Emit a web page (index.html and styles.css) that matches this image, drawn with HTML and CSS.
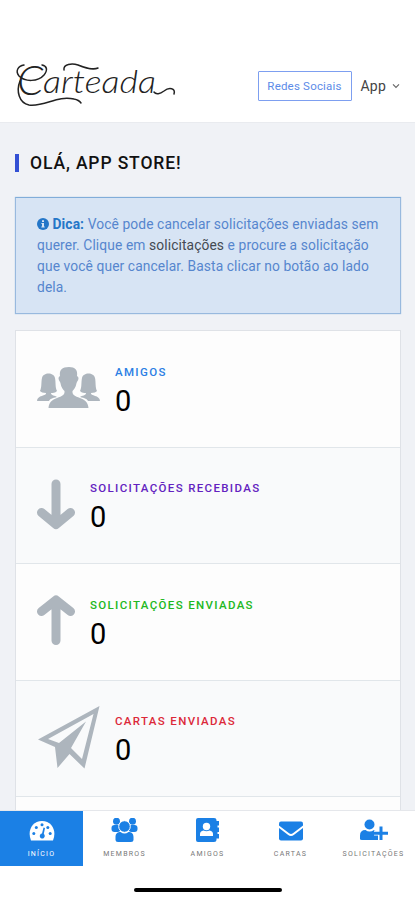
FILE: index.html
```html
<!DOCTYPE html>
<html lang="pt-BR">
<head>
<meta charset="utf-8">
<meta name="viewport" content="width=device-width, initial-scale=1">
<title>Carteada</title>
<link rel="stylesheet" href="styles.css">
</head>
<body>
<div class="app">
  <header class="header">
    <svg class="logo" viewBox="0 0 164 52">
      <text class="logo-cap" x="2" y="38">C</text>
      <text class="logo-text" x="28" y="36" textLength="113" lengthAdjust="spacingAndGlyphs">arteada</text>
      <path class="swash" d="M9 8C3 9 0 14 4 19C10 25 23 25 29 18C33 13 32 9 27 8"/>
      <path class="swash" d="M5 24C1 34 4 46 14 48C30 50 42 38 59 42Q64 43 66 46"/>
      <path class="swash" d="M49 13C48 7 57 6 63 8C70 11 79 13 83 11"/>
      <path class="swash" d="M139 35C141 38 145 37 149 34C154 30 161 31 159 37"/>
    </svg>
    <div class="header-actions">
      <a class="social">Redes Sociais</a>
      <span class="menu">App<svg class="chevron" viewBox="0 0 8 6"><path d="M1 1.3L4 4.5L7 1.3"/></svg></span>
    </div>
  </header>
  <main class="main">
    <h1 class="title">OLÁ, APP STORE!</h1>
    <div class="tip">
      <svg class="info" viewBox="0 0 12 12"><circle cx="6" cy="6" r="6" fill="#2476c8"/><path d="M5 2.2h2v1.7H5zM4.4 5H7v3.5h.7v1H4.3v-1H5V6h-.6z" fill="#d7e4f4"/></svg>
      <b>Dica:</b> Você pode cancelar solicitações enviadas sem<br>querer. Clique em <span class="dark">solicitações</span> e procure a solicitação<br>que você quer cancelar. Basta clicar no botão ao lado<br>dela.
    </div>
    <section class="stats">
      <div class="stat">
        <svg class="wide" viewBox="0 0 63 64">
          <path d="M0 45C0 39 10 40 9 37C6 37 4 36 3 35C5 31 4 26 5 22C6 16 17 16 18 22C19 27 18 31 20 35C18 37 16 37 14 37C14 40 18 39 20 41C15 42 13 43 12 45Z"/>
          <path d="M63 45C63 39 53 40 54 37C57 37 59 36 60 35C58 31 59 26 58 22C57 16 46 16 45 22C44 27 45 31 43 35C45 37 47 37 49 37C49 40 45 39 43 41C48 42 50 43 51 45Z"/>
          <path d="M11.500 52C12 46 15 44 20 42C25 40 28 39 27.500 35C24 32 24 28 23 26C21 23 21 21 23 20C22 14 25 11 32 11C38 11 41 14 40 20C42 21 42 23 40 26C39 28 39 32 35.500 35C35 39 38 40 43 42C48 44 51 46 51.500 52Z"/>
        </svg>
        <div class="copy"><div class="label blue">AMIGOS</div><div class="number">0</div></div>
      </div>
      <div class="stat">
        <svg class="arrow" viewBox="0 0 38 64"><path d="M19 11V51M4.500 39.500L19 51.500L33.500 39.500"/></svg>
        <div class="copy"><div class="label purple">SOLICITAÇÕES RECEBIDAS</div><div class="number">0</div></div>
      </div>
      <div class="stat">
        <svg class="arrow" viewBox="0 0 38 64"><path d="M19 51.500V12M4.500 22.500L19 11L33.500 22.500"/></svg>
        <div class="copy"><div class="label green">SOLICITAÇÕES ENVIADAS</div><div class="number">0</div></div>
      </div>
      <div class="stat">
        <svg class="wide" viewBox="0 0 63 64"><path fill-rule="evenodd" d="M1 33.500L62.500 0L47.500 62.500L32.500 48L20.500 62L18 41ZM11 33L22 37L49 15.500L34 42L45 53L56.500 8Z"/></svg>
        <div class="copy"><div class="label red">CARTAS ENVIADAS</div><div class="number">0</div></div>
      </div>
      <div class="stat"></div>
    </section>
  </main>
  <nav class="nav">
    <a class="tab active"><svg viewBox="0 0 28 26"><path fill="#fff" d="M3 22.500C-1 13 4 3 14 3S29 13 25 22.500Z"/><g fill="#1b80e5"><circle cx="14" cy="6.800" r="1.500"/><circle cx="8.300" cy="9.500" r="1.500"/><circle cx="5.800" cy="15.500" r="1.500"/><circle cx="22.200" cy="15.500" r="1.500"/><circle cx="19.800" cy="9.500" r="1.500"/><path d="M15.500 9.500L17 10L15.800 16A2.500 2.500 0 1 1 14 15.500Z"/></g></svg><span>INÍCIO</span></a>
    <a class="tab"><svg viewBox="0 0 28 26"><circle cx="5.500" cy="3.200" r="3.500"/><circle cx="21.500" cy="3.200" r="3.500"/><rect x=".5" y="7" width="9" height="7" rx="3"/><rect x="17.500" y="7" width="9" height="7" rx="3"/><circle cx="13.500" cy="8.500" r="5.800" stroke="#fff"/><path d="M4.500 24V19C4.500 15 7 14 9.500 14Q13.500 17 17.500 14C20 14 22.500 15 22.500 19V22Q22.500 24 20 24H7Q4.500 24 4.500 22Z"/></svg><span>MEMBROS</span></a>
    <a class="tab"><svg viewBox="0 0 28 26"><path d="M4 0H20Q22.500 0 22.500 2V3H25V7.500H23.500V9.500H25V14H23.500V16H25V20.500H22.500V22Q22.500 24 20 24H4Q2 24 2 22V2Q2 0 4 0Z"/><circle cx="12.500" cy="8.500" r="3.700" fill="#fff"/><path d="M6 18V16Q6 13 9.500 12.500Q12.500 14 15.500 12.500Q19 13 19 16V18Z" fill="#fff"/></svg><span>AMIGOS</span></a>
    <a class="tab"><svg viewBox="0 0 28 26"><rect x="2" y="3.500" width="24" height="19" rx="2"/><path d="M1 8L11.500 16Q14 18 16.500 16L27 8" fill="none" stroke="#fff" stroke-width="2"/></svg><span>CARTAS</span></a>
    <a class="tab"><svg viewBox="0 0 28 26"><circle cx="9.500" cy="6.500" r="5"/><path d="M0 21V17.500Q0 12 5.500 12Q9.500 15 14 12Q17 13 17 17H18V22H2Q0 22 0 21Z"/><path d="M21 8V22M14 15H28" fill="none" stroke="#fff" stroke-width="5"/><path d="M21 8.500V22M14 15.200H28" fill="none" stroke="#1b80e5" stroke-width="3"/></svg><span>SOLICITAÇÕES</span></a>
  </nav>
  <div class="home"><div class="home-bar"></div></div>
</div>
</body>
</html>
```
FILE: styles.css
```css
* { box-sizing: border-box; }
body { margin: 0; font-family: Roboto, "Liberation Sans", sans-serif; background: #fff; color: #111; }
.app { height: 900px; display: flex; flex-direction: column; overflow: hidden; }
.header { height: 123px; flex: none; padding: 57px 15px 0 15px; display: flex; align-items: flex-start; justify-content: space-between; border-bottom: 1px solid #e9ebef; }
.logo { width: 164px; height: 52px; overflow: visible; }
.logo-cap { font: italic 300 42px Lato, sans-serif; fill: #222; }
.logo-text { font: italic 300 31px Lato, sans-serif; fill: #222; }
.swash { fill: none; stroke: #222; stroke-width: 1.5; stroke-linecap: round; }
.header-actions { display: flex; align-items: center; gap: 9px; margin-top: 14px; }
.social { width: 94px; height: 30px; border: 1px solid #7d9ff0; border-radius: 1px; color: #5c8be8; font-size: 11.500px; line-height: 28px; text-align: center; letter-spacing: .2px; white-space: nowrap; }
.menu { display: flex; align-items: center; font-size: 14px; color: #444; letter-spacing: .2px; }
.chevron { width: 8px; height: 6px; margin-left: 6px; fill: none; stroke: #666; stroke-width: 1.1; }
.main { flex: 1; min-height: 0; background: #f0f2f6; padding: 31px 14px 0 15px; overflow: hidden; }
.title { margin: 0; height: 18px; border-left: 4px solid #3350d4; padding-left: 11px; font-size: 17.5px; line-height: 18px; font-weight: 500; letter-spacing: .87px; }
.tip { margin-top: 25px; height: 117px; border: 1px solid #98b9de; border-top-color: #81add9; box-shadow: 0 0 1px #9dbce0; background: #d7e4f4; padding: 16px 0 0 21px; font-size: 13.8px; line-height: 21px; color: #5686ce; white-space: nowrap; letter-spacing: .1px; }
.tip b { color: #2476c8; font-weight: 700; }
.dark { color: #444a52; }
.info { width: 12px; height: 12px; vertical-align: -1px; }
.stats { margin-top: 16px; border: 1px solid #dfe2e7; background: #fdfdfd; }
.stat { height: 116.500px; border-bottom: 1px solid #e1e6ea; padding: 25px 0 0 21px; display: flex; }
.stat:nth-child(even) { background: #f9fafb; }
.stat svg { height: 64px; fill: #adb5bd; flex: none; }
.wide { width: 63px; }
.arrow { width: 38px; }
.stat .arrow { fill: none; stroke: #adb5bd; stroke-width: 9; stroke-linecap: round; stroke-linejoin: round; }
.copy { margin-left: 15px; padding-top: 8.500px; }
.label { font-size: 11.500px; line-height: 15px; font-weight: 500; letter-spacing: 1.34px; white-space: nowrap; }
.blue { color: #2b7fe4; }
.purple { color: #6322c0; }
.green { color: #22b822; }
.red { color: #dc2839; }
.number { margin-top: 5px; font-size: 29px; line-height: 32px; color: #000; }
.nav { height: 56px; flex: none; border-top: 1px solid #e5e7eb; display: grid; grid-template-columns: repeat(5, 83px); background: #fff; }
.tab { display: flex; flex-direction: column; align-items: center; padding-top: 7px; color: #777; font-size: 7px; line-height: 10px; letter-spacing: 1.25px; white-space: nowrap; }
.tab svg { width: 28px; height: 26px; fill: #1b80e5; }
.tab span { margin-top: 5px; }
.tab:first-child, .active { background: #1b80e5; color: #fff; }
.home { height: 34px; flex: none; display: flex; justify-content: center; padding-top: 22px; }
.home-bar { width: 148px; height: 4px; border-radius: 2px; background: #000; }
```
